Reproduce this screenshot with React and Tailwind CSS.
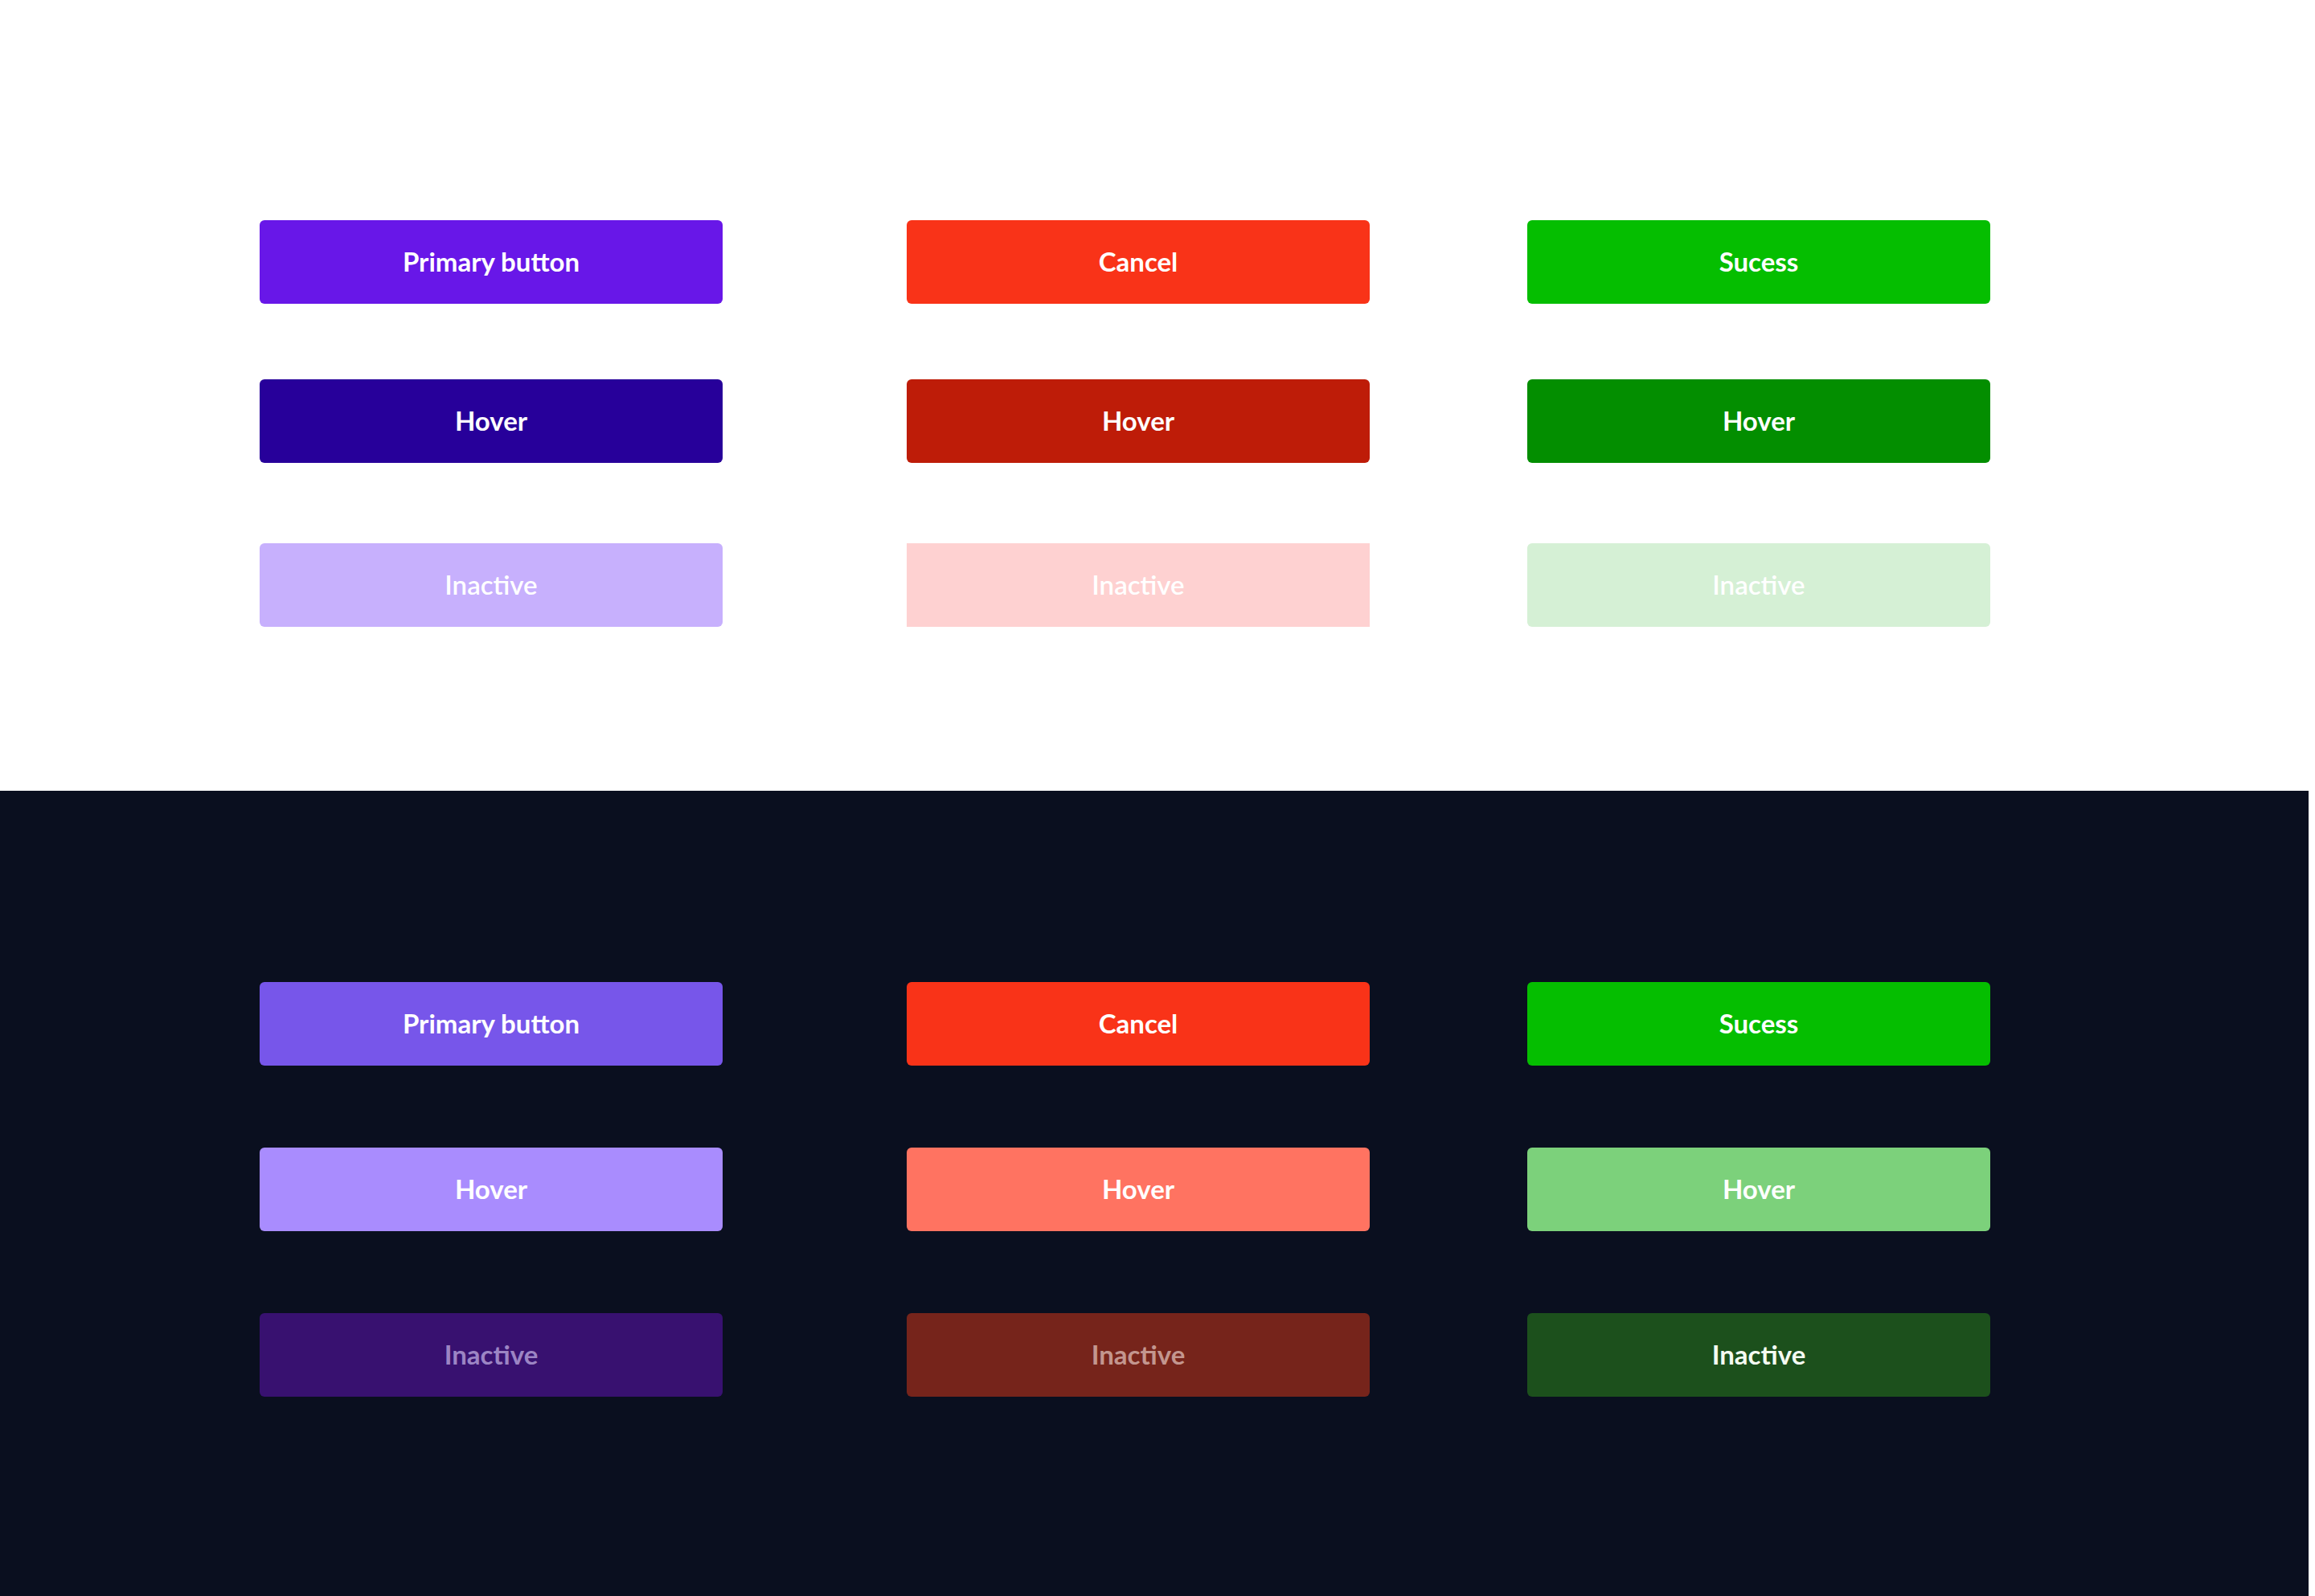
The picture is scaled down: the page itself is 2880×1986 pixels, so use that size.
const lightRows = [
  {
    mt: "mt-[274px]",
    items: [
      { label: "Primary button", cls: "bg-[#6817e8] text-white rounded-md" },
      { label: "Cancel", cls: "bg-[#f93318] text-white rounded-md" },
      { label: "Sucess", cls: "bg-[#05be00] text-white rounded-md" },
    ],
  },
  {
    mt: "mt-[94px]",
    items: [
      { label: "Hover", cls: "bg-[#27009a] text-white rounded-md" },
      { label: "Hover", cls: "bg-[#be1c08] text-white rounded-md" },
      { label: "Hover", cls: "bg-[#038e00] text-white rounded-md" },
    ],
  },
  {
    mt: "mt-[100px]",
    items: [
      { label: "Inactive", cls: "bg-[#c7b0fd] text-white rounded-md font-semibold" },
      { label: "Inactive", cls: "bg-[#fed1d1] text-white font-semibold" },
      { label: "Inactive", cls: "bg-[#d5f0d5] text-white rounded-md font-semibold" },
    ],
  },
];

const darkRows = [
  {
    mt: "mt-[238px]",
    items: [
      { label: "Primary button", cls: "bg-[#7756ea] text-white rounded-md" },
      { label: "Cancel", cls: "bg-[#f93318] text-white rounded-md" },
      { label: "Sucess", cls: "bg-[#05be00] text-white rounded-md" },
    ],
  },
  {
    mt: "mt-[102px]",
    items: [
      { label: "Hover", cls: "bg-[#a98cfe] text-white rounded-md" },
      { label: "Hover", cls: "bg-[#ff7361] text-white rounded-md" },
      { label: "Hover", cls: "bg-[#7cd17b] text-white rounded-md" },
    ],
  },
  {
    mt: "mt-[102px]",
    items: [
      { label: "Inactive", cls: "bg-[#381170] text-[#9c85c4] rounded-md" },
      { label: "Inactive", cls: "bg-[#76241b] text-[#c3968f] rounded-md" },
      { label: "Inactive", cls: "bg-[#1c501c] text-[#f4fbf2] rounded-md" },
    ],
  },
];

const colMargins = ["ml-[323px]", "ml-[229px]", "ml-[196px]"];

function Button({ label, cls, margin }) {
  return (
    <button
      className={`${margin} flex h-[104px] w-[576px] items-center justify-center text-[33px] font-bold ${cls}`}
    >
      {label}
    </button>
  );
}

function ButtonRow({ row }) {
  return (
    <div className={`flex ${row.mt}`}>
      {row.items.map((item, i) => (
        <Button key={i} margin={colMargins[i]} {...item} />
      ))}
    </div>
  );
}

export default function App() {
  return (
    <div
      className="flex w-[2880px] flex-col bg-white"
      style={{ fontFamily: "Lato, 'Noto Sans', sans-serif" }}
    >
      <section className="flex h-[984px] flex-col bg-white">
        {lightRows.map((row, i) => (
          <ButtonRow key={i} row={row} />
        ))}
      </section>
      <section className="flex h-[1002px] w-[2872px] flex-col overflow-hidden bg-[#0a0f1f]">
        {darkRows.map((row, i) => (
          <ButtonRow key={i} row={row} />
        ))}
      </section>
    </div>
  );
}
